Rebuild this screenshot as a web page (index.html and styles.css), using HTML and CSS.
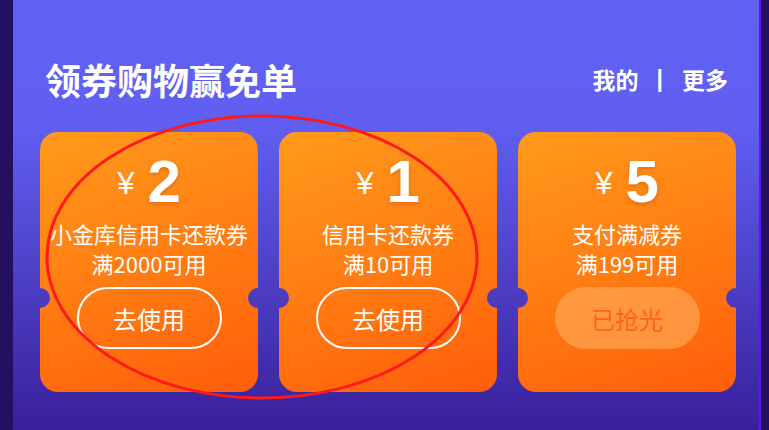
FILE: index.html
```html
<!DOCTYPE html>
<html lang="zh-CN">
<head>
    <meta charset="UTF-8">
    <meta name="viewport" content="width=device-width, initial-scale=1.0">
    <title>领券购物赢免单</title>
    <link rel="stylesheet" href="styles.css">
</head>
<body>
    <div class="panel">
        <div class="header">
            <h1 class="title">领券购物赢免单</h1>
            <div class="links">
                <span>我的</span>
                <span class="sep">|</span>
                <span>更多</span>
            </div>
        </div>

        <div class="coupons">
            <div class="coupon">
                <div class="amount"><span class="yen">¥</span>2</div>
                <div class="desc">小金库信用卡还款券<br>满2000可用</div>
                <button class="btn">去使用</button>
            </div>
            <div class="coupon">
                <div class="amount"><span class="yen">¥</span>1</div>
                <div class="desc">信用卡还款券<br>满10可用</div>
                <button class="btn">去使用</button>
            </div>
            <div class="coupon">
                <div class="amount"><span class="yen">¥</span>5</div>
                <div class="desc">支付满减券<br>满199可用</div>
                <button class="btn btn-out">已抢光</button>
            </div>
        </div>

        <!-- 红色圈注 -->
        <svg class="mark" width="769" height="430" viewBox="0 0 769 430">
            <ellipse cx="262" cy="257" rx="215" ry="141" fill="none" stroke="#ff1a1a" stroke-width="3"/>
        </svg>
    </div>
</body>
</html>
```

FILE: styles.css
```css
body {
    margin: 0;
    background-color: #231060;
    font-family: "Noto Sans CJK SC", "Liberation Sans", sans-serif;
    color: white;
    overflow: hidden;
}
.panel {
    margin-left: 13px;
    width: 748px;
    height: 430px;
    border-right: 2px solid #5b17ee;
    background: linear-gradient(#6161f3 0, #605ff1 125px, #39209a 100%);
    box-sizing: border-box;
    padding: 61px 0 0 27px;
}
.header {
    display: flex;
    align-items: center;
    justify-content: space-between;
    padding-left: 5px;
    padding-right: 31px;
}
.title {
    margin: 0;
    font-size: 36px;
    line-height: 36px;
    font-weight: bold;
}
.links {
    font-size: 23px;
    font-weight: bold;
    display: flex;
    align-items: center;
}
.links .sep {
    font-family: "Liberation Sans", sans-serif;
    margin: 0 19px 0 18px;
}
.coupons {
    display: flex;
    gap: 21px;
    margin-top: 35px;
}
.coupon {
    position: relative;
    width: 218px;
    height: 260px;
    border-radius: 18px;
    background: linear-gradient(160deg, #ff9b1c 0%, #ff7a12 55%, #ff5d0a 100%);
    display: flex;
    flex-direction: column;
    align-items: center;
    padding-top: 20px;
    box-sizing: border-box;
}
.coupon::before,
.coupon::after {
    content: "";
    position: absolute;
    top: 156px;
    width: 20px;
    height: 20px;
    border-radius: 50%;
    background: linear-gradient(#6161f3 0, #605ff1 125px, #39209a 430px);
    background-attachment: fixed;
}
.coupon::before {
    left: -10px;
}
.coupon::after {
    right: -10px;
}
.amount {
    font-family: "Liberation Sans", sans-serif;
    font-size: 60px;
    line-height: 60px;
    font-weight: bold;
    text-shadow: 0 2px 4px rgba(170, 60, 0, 0.35);
}
.yen {
    font-size: 31px;
    font-weight: normal;
    vertical-align: 8px;
    margin-right: 13px;
    text-shadow: none;
}
.desc {
    margin-top: 4px;
    font-size: 22px;
    line-height: 30px;
    text-align: center;
}
.btn {
    margin-top: 9px;
    width: 145px;
    height: 62px;
    border: 2px solid white;
    border-radius: 31px;
    background: none;
    color: white;
    font-family: "Noto Sans CJK SC", sans-serif;
    font-size: 24px;
    padding: 0;
}
.btn-out {
    border-color: transparent;
    background-color: rgba(255, 175, 95, 0.6);
    color: #ff6416;
}
.mark {
    position: absolute;
    left: 0;
    top: 0;
    pointer-events: none;
}
```
